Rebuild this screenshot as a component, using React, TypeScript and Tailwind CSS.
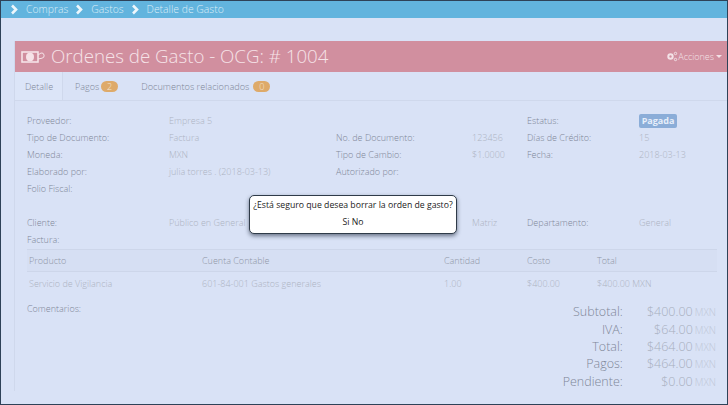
import React from "react";

const rows = [
  ["Proveedor:", "Empresa 5", "", "", "Estatus:", "badge"],
  ["Tipo de Documento:", "Factura", "No. de Documento:", "123456", "Días de Crédito:", "15"],
  ["Moneda:", "MXN", "Tipo de Cambio:", "$1.0000", "Fecha:", "2018-03-13"],
  ["Elaborado por:", "julia torres . (2018-03-13)", "Autorizado por:", "", "", ""],
  ["Folio Fiscal:", "", "", "", "", ""],
];

const totals = [
  ["Subtotal:", "$400.00"],
  ["IVA:", "$64.00"],
  ["Total:", "$464.00"],
  ["Pagos:", "$464.00"],
  ["Pendiente:", "$0.00"],
];

function Chevron() {
  return (
    <svg width="9" height="11" viewBox="0 0 9 11" className="shrink-0">
      <path d="M2 1.5 L6 5.5 L2 9.5" fill="none" stroke="#eef7fc" strokeWidth="2.6" />
    </svg>
  );
}

function MoneyIcon() {
  return (
    <svg width="26" height="13" viewBox="0 0 26 13" className="shrink-0">
      <rect x="1" y="2" width="16" height="10" fill="none" stroke="#f6e3e8" strokeWidth="1.6" />
      <ellipse cx="9" cy="7" rx="4" ry="4.2" fill="#f6e3e8" />
      <path d="M17 5 L20 3 A2.6 2.6 0 1 1 21 8.2 L17 9" fill="none" stroke="#f6e3e8" strokeWidth="1" />
    </svg>
  );
}

function GearsIcon() {
  return (
    <svg width="11" height="11" viewBox="0 0 11 11" className="shrink-0">
      <circle cx="3.5" cy="5.5" r="2.2" fill="none" stroke="#f3e2e7" strokeWidth="2" />
      <circle cx="8.5" cy="2.5" r="1.2" fill="none" stroke="#f3e2e7" strokeWidth="1" />
      <circle cx="8.5" cy="8.5" r="1.2" fill="none" stroke="#f3e2e7" strokeWidth="1" />
    </svg>
  );
}

function App() {
  return (
    <div className="relative w-[728px] h-[405px] overflow-hidden bg-[#d9e2f6] border border-[#2e4258] font-['Open_Sans',sans-serif] text-[9px] font-light text-[#8f96a6]">
      <div className="h-[17px] bg-[#62b4de] flex items-center gap-[7px] pl-[9px] text-[10.4px] text-[#dcedf7]">
        <Chevron />
        <span>Compras</span>
        <Chevron />
        <span>Gastos</span>
        <Chevron />
        <span>Detalle de Gasto</span>
      </div>

      <div className="ml-[13px] mt-[23px] border-l border-[#cfd8ec]">
        <div className="h-[31px] bg-[#d18f9f] flex items-center pl-[6px] pr-[5px] text-[#f6e3e8]">
          <MoneyIcon />
          <span className="ml-[4px] text-[18.7px] font-light">Ordenes de Gasto - OCG: # 1004</span>
          <div className="ml-auto flex items-center text-[9px] text-[#f3e2e7]">
            <GearsIcon />
            <span>Acciones</span>
            <span className="ml-[2px] w-0 h-0 border-l-[3px] border-r-[3px] border-t-[3px] border-l-transparent border-r-transparent border-t-[#f3e2e7]" />
          </div>
        </div>

        <div className="h-[29px] flex items-stretch border-b border-[#cfd8ec] text-[9px] text-[#7f8798]">
          <div className="w-[48px] pl-[10px] pt-[8px] border-r border-[#cfd8ec] bg-[#dce5f8]">Detalle</div>
          <div className="ml-[12px] pt-[8px] flex items-start gap-[2px]">
            Pagos
            <span className="mt-[1px] w-[17px] h-[11px] rounded-full bg-[#deaa6a] text-[#f4e6d2] text-center leading-[11px]">2</span>
          </div>
          <div className="ml-[23px] pt-[8px] flex items-start gap-[4px] text-[9.2px]">
            Documentos relacionados
            <span className="mt-[1px] w-[17px] h-[11px] rounded-full bg-[#deaa6a] text-[#f4e6d2] text-center leading-[11px]">0</span>
          </div>
        </div>

        <div className="pl-[12px] pt-[11px] pr-[10px]">
          <div className="grid grid-cols-[142px_167px_136px_55px_112px_auto] auto-rows-[17.2px] items-center leading-[12px]">
            {rows.map((r) =>
              r.map((cell, i) =>
                cell === "badge" ? (
                  <span key={r[0] + i} className="w-[38px] h-[14px] rounded-[2px] bg-[#8badd8] text-[#e6eefa] font-bold text-center leading-[14px]">
                    Pagada
                  </span>
                ) : (
                  <span key={r[0] + i} className={i % 2 === 0 ? "text-[#7f8798]" : "text-[#adb3c2]"}>
                    {cell}
                  </span>
                )
              )
            )}
          </div>

          <div className="mt-[17px] grid grid-cols-[142px_303px_55px_112px_auto] auto-rows-[17px] items-center leading-[12px]">
            <span className="text-[#7f8798]">Cliente:</span>
            <span className="text-[#adb3c2]">Público en General</span>
            <span className="text-[#adb3c2]">Matriz</span>
            <span className="text-[#7f8798]">Departamento:</span>
            <span className="text-[#adb3c2]">General</span>
            <span className="text-[#7f8798]">Factura:</span>
          </div>

          <div className="border-t border-b border-[#cdd6ea] h-[23px] bg-[#d6dff3] grid grid-cols-[173px_242px_83px_70px_auto] items-center pl-[2px] text-[#8f96a6]">
            <span>Producto</span>
            <span>Cuenta Contable</span>
            <span>Cantidad</span>
            <span>Costo</span>
            <span>Total</span>
          </div>
          <div className="h-[23px] grid grid-cols-[173px_242px_83px_70px_auto] items-center pl-[2px] text-[#adb3c2]">
            <span>Servicio de Vigilancia</span>
            <span>601-84-001 Gastos generales</span>
            <span>1.00</span>
            <span>$400.00</span>
            <span>$400.00 MXN</span>
          </div>

          <div className="flex justify-between">
            <span className="mt-[7px] text-[#7f8798]">Comentarios:</span>
            <div className="mt-[9px] mr-[1px] grid grid-cols-[auto_70px_auto] auto-rows-[17.4px] items-center text-[12.5px] font-light">
              {totals.map(([label, value]) => (
                <React.Fragment key={label}>
                  <span className="text-right text-[#7f8798]">{label}</span>
                  <span className="text-right text-[#a8afbe]">{value}</span>
                  <span className="ml-[2px] text-[10px] text-[#c0c7d6]">MXN</span>
                </React.Fragment>
              ))}
            </div>
          </div>
        </div>
      </div>

      <div className="absolute left-[248px] top-[194px] w-[208px] h-[39px] rounded-[5px] bg-white border border-[#2f3b49] shadow-[0_2px_4px_rgba(30,40,60,0.6)] text-[8.7px] font-normal text-[#222] text-center leading-[17px] pt-[1px] whitespace-nowrap">
        <div>¿Está seguro que desea borrar la orden de gasto?</div>
        <div>Si No</div>
      </div>
    </div>
  );
}

export default App;
